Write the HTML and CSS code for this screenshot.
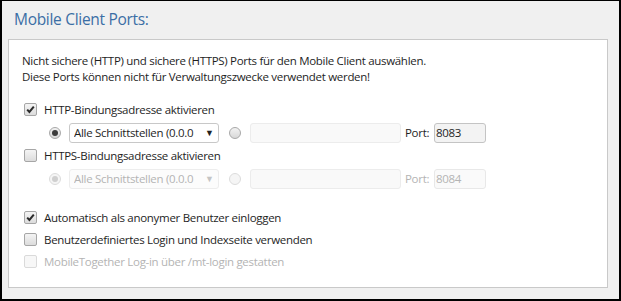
FILE: index.html
```html
<!DOCTYPE html>
<html lang="de">
<head>
<meta charset="utf-8">
<title>Mobile Client Ports</title>
<link rel="stylesheet" href="styles.css">
</head>
<body>
<div class="frame">
  <div class="title">Mobile Client Ports:</div>
  <div class="panel">
    <div class="desc">
      <div>Nicht sichere (HTTP) und sichere (HTTPS) Ports für den Mobile Client auswählen.</div>
      <div>Diese Ports können nicht für Verwaltungszwecke verwendet werden!</div>
    </div>

    <div class="group">
      <div class="row">
        <span class="cb checked"><svg viewBox="0 0 13 13" width="13" height="13"><path d="M3.2 6.6 L5.4 9 L9.8 3.6" fill="none" stroke="#2b2b2b" stroke-width="2"/></svg></span>
        <span class="label">HTTP-Bindungsadresse aktivieren</span>
      </div>
      <div class="row sub">
        <span class="radio on"><span class="dot"></span></span>
        <span class="select"><span class="sel-text">Alle Schnittstellen (0.0.0</span><span class="arrow">▼</span></span>
        <span class="radio second-radio"></span>
        <span class="field"></span>
        <span class="port-label">Port:</span>
        <span class="port">8083</span>
      </div>
      <div class="row">
        <span class="cb"></span>
        <span class="label">HTTPS-Bindungsadresse aktivieren</span>
      </div>
      <div class="row sub disabled">
        <span class="radio on"><span class="dot"></span></span>
        <span class="select"><span class="sel-text">Alle Schnittstellen (0.0.0</span><span class="arrow">▼</span></span>
        <span class="radio second-radio"></span>
        <span class="field"></span>
        <span class="port-label">Port:</span>
        <span class="port">8084</span>
      </div>
    </div>

    <div class="group second">
      <div class="row tight">
        <span class="cb checked"><svg viewBox="0 0 13 13" width="13" height="13"><path d="M3.2 6.6 L5.4 9 L9.8 3.6" fill="none" stroke="#2b2b2b" stroke-width="2"/></svg></span>
        <span class="label">Automatisch als anonymer Benutzer einloggen</span>
      </div>
      <div class="row tight">
        <span class="cb"></span>
        <span class="label">Benutzerdefiniertes Login und Indexseite verwenden</span>
      </div>
      <div class="row tight disabled">
        <span class="cb"></span>
        <span class="label">MobileTogether Log-in über /mt-login gestatten</span>
      </div>
    </div>
  </div>
</div>
</body>
</html>
```

FILE: styles.css
```css
* { box-sizing: border-box; }

html, body {
  margin: 0;
  padding: 0;
  background: #f0f0f0;
}

.frame {
  width: 621px;
  height: 301px;
  border: 2px solid #000;
  border-top-width: 1px;
  background: #f0f0f0;
  padding: 0 0 0 6px;
  font-family: "Open Sans", "Noto Sans", sans-serif;
  color: #1e1e1e;
  overflow: hidden;
}

.title {
  height: 38px;
  padding: 7px 0 0 6px;
  font-size: 15.5px;
  line-height: 22px;
  letter-spacing: -0.3px;
  color: #3b6ea5;
}

.panel {
  width: 600px;
  height: 249px;
  background: #fff;
  border: 1px solid #c9c9c9;
  padding: 13px 0 0 13px;
  font-size: 11.5px;
  letter-spacing: -0.3px;
}

.desc {
  line-height: 16px;
}

.group {
  margin-top: 13px;
  display: flex;
  flex-direction: column;
}

.group.second {
  margin-top: 16px;
}

.row {
  height: 23px;
  display: flex;
  align-items: center;
  padding-left: 2px;
}

.row.tight {
  height: 22px;
}

.row.sub {
  padding-left: 27px;
}

.label {
  margin-left: 7px;
}

.cb {
  width: 13px;
  height: 13px;
  border: 1px solid #a6a6a6;
  border-radius: 2px;
  background: linear-gradient(#f4f4f4, #dcdcdc);
  display: inline-flex;
  align-items: center;
  justify-content: center;
  flex: none;
}

.cb svg {
  display: block;
  margin: -1px;
}

.radio {
  width: 12px;
  height: 12px;
  border-radius: 50%;
  border: 1px solid #a8a8a8;
  background: linear-gradient(#f2f2f2, #d8d8d8);
  display: inline-flex;
  align-items: center;
  justify-content: center;
  flex: none;
}

.radio .dot {
  width: 6px;
  height: 6px;
  border-radius: 50%;
  background: #3c3c3c;
}

.select {
  margin-left: 8px;
  width: 150px;
  height: 20px;
  border: 1px solid #c8c8c8;
  border-radius: 3px;
  background: #fff;
  display: flex;
  align-items: center;
  padding: 0 0 0 4px;
  overflow: hidden;
  flex: none;
}

.sel-text {
  white-space: nowrap;
  overflow: hidden;
  width: 127px;
}

.arrow {
  font-size: 9px;
  margin-left: 4px;
  color: #222;
}

.second-radio {
  margin-left: 10px;
}

.field {
  margin-left: 9px;
  width: 151px;
  height: 20px;
  border: 1px solid #ececec;
  border-radius: 3px;
  background: #f9f9f9;
  flex: none;
}

.port-label {
  margin-left: 4px;
  width: 29px;
}

.port {
  width: 52px;
  height: 20px;
  border: 1px solid #c4c4c4;
  border-radius: 3px;
  background: #f3f3f3;
  padding: 0 0 0 1px;
  line-height: 18px;
  flex: none;
}

.disabled {
  color: #b4b4b4;
}

.disabled .cb {
  border-color: #dadada;
  background: #f7f7f7;
}

.disabled .radio {
  border-color: #dcdcdc;
  background: #f5f5f5;
}

.disabled .radio .dot {
  background: #cfcfcf;
}

.disabled .select {
  border-color: #ededed;
  background: #fcfcfc;
}

.disabled .arrow {
  color: #c4c4c4;
}

.disabled .port {
  border-color: #e8e8e8;
  background: #fafafa;
}
```
